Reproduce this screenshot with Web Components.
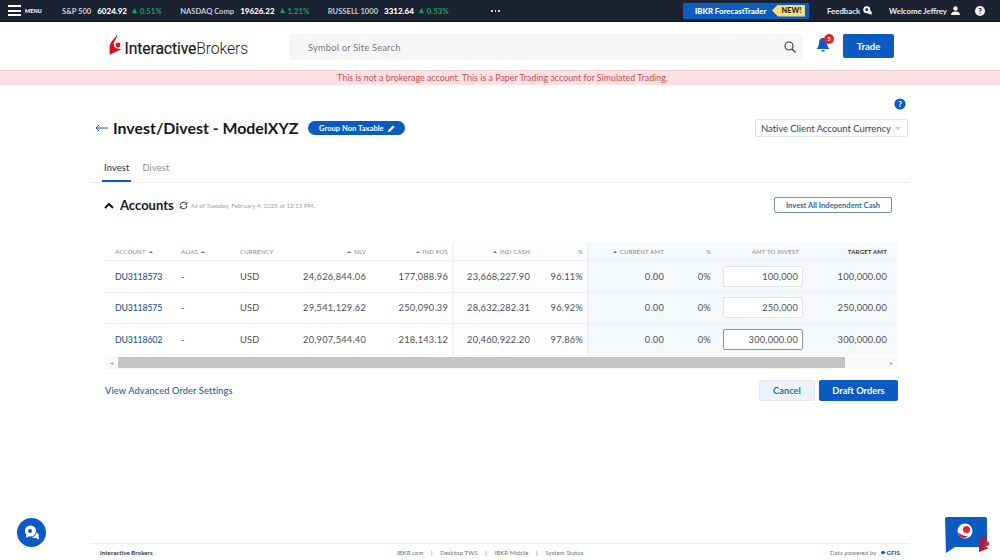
<!DOCTYPE html>
<html lang="en"><head><meta charset="utf-8"><title>Invest/Divest</title>
<style>
html,body{margin:0;height:560px;overflow:hidden;background:#fff}
body{font-family:Lato,"Open Sans",sans-serif;color:#2a2f36;display:flex;flex-direction:column;position:relative}
ib-main{flex:1}
</style></head><body>
<ib-topbar></ib-topbar>
<ib-header></ib-header>
<ib-banner>This is not a brokerage account. This is a Paper Trading account for Simulated Trading.</ib-banner>
<ib-main></ib-main>
<ib-footer></ib-footer>
<ib-fab></ib-fab>
<script>
function def(name,html,init){customElements.define(name,class extends HTMLElement{constructor(){super();this.attachShadow({mode:'open'}).innerHTML=html;if(init)init(this.shadowRoot)}})}

def('ib-tick',`<style>
:host{display:inline-flex;align-items:center;font:700 7.6px Lato,sans-serif;color:#c9ccd2;white-space:nowrap}
b{color:#fff;font-weight:900;margin:0 5px 0 6px;font-size:8px}
i{font-style:normal;color:#12a55c;font-weight:700;display:inline-flex;align-items:center;gap:3px;font-size:7.8px}
svg{width:5px;height:5px}
</style><span><slot name="n"></slot></span><b><slot name="v"></slot></b><i><svg viewBox="0 0 10 10"><path d="M5 0 10 10H0z" fill="#12a55c"/></svg><slot name="p"></slot></i>`);

def('ib-topbar',`<style>
:host{display:flex;align-items:center;height:21px;background:#1b2231;border-bottom:1px solid #10141d;color:#fff;box-sizing:content-box;font-family:Lato,sans-serif;position:relative}
.burger{width:13px;height:11px;margin-left:8px;display:flex;flex-direction:column;justify-content:space-between;flex:none}
.burger i{display:block;height:2px;background:#fff}
.m{font-size:5.4px;font-weight:900;margin-left:4px;letter-spacing:.1px;width:20px}
.t{display:flex;margin-left:17px;gap:18.4px;width:429px;flex:none}
.dots{display:flex;gap:2px;flex:none;width:9px}
.dots i{width:2px;height:2px;border-radius:50%;background:#fff;display:block}
.ft{margin-left:183px;width:126px;height:16px;background:#0d5cc0;display:flex;align-items:center;font-size:7.8px;font-weight:900;box-sizing:border-box;padding-left:12px;border-radius:1px;position:relative;overflow:hidden;white-space:nowrap;flex:none}
.new{position:absolute;right:4px;top:2px;height:12px;width:33px;background:#f6dc7a;color:#2c2a1a;font-size:7.4px;display:flex;align-items:center;justify-content:center;clip-path:polygon(6px 0,100% 0,100% 100%,6px 100%,0 50%);box-sizing:border-box;padding-left:6px}
.r{display:flex;align-items:center;font-size:7.8px;font-weight:700;color:#eceef1;white-space:nowrap}
svg{display:block;flex:none}
</style>
<div class="burger"><i></i><i></i><i></i></div><div class="m">MENU</div>
<div class="t">
<ib-tick><span slot="n">S&amp;P 500</span><span slot="v">6024.92</span><span slot="p">0.51%</span></ib-tick>
<ib-tick><span slot="n">NASDAQ Comp</span><span slot="v">19626.22</span><span slot="p">1.21%</span></ib-tick>
<ib-tick><span slot="n">RUSSELL 1000</span><span slot="v">3312.64</span><span slot="p">0.53%</span></ib-tick>
</div><div class="dots"><i></i><i></i><i></i></div>
<div class="ft">IBKR ForecastTrader<span class="new">NEW!</span></div>
<div class="r" style="margin-left:18px;width:46px">Feedback<svg style="margin-left:3px" width="9" height="9" viewBox="0 0 12 12"><circle cx="5" cy="5" r="4.6" fill="#fff"/><circle cx="5" cy="5" r="1.9" fill="#1b2231"/><path d="M9.4 5.600c1.800 1 2.400 2.400 2 3.600l.4 2.400-2.600-1c-1.200.3-2.400 0-3.400-.7 2 0 3.400-2.100 3.600-4.300z" fill="#fff"/></svg></div>
<div class="r" style="margin-left:16px;width:71px">Welcome Jeffrey<svg style="margin-left:auto" width="9" height="9" viewBox="0 0 12 12"><circle cx="6" cy="3.200" r="3" fill="#fff"/><path d="M0 12c0-3.600 2.600-4.800 6-4.800s6 1.200 6 4.800z" fill="#fff"/></svg></div>
<svg style="margin-left:15px" width="10" height="10" viewBox="0 0 12 12"><circle cx="6" cy="6" r="6" fill="#f2f3f5"/><text x="6" y="9.200" text-anchor="middle" font-size="9" font-weight="900" font-family="Lato" fill="#1b2231">?</text></svg>`);

def('ib-header',`<style>
:host{display:flex;align-items:center;height:48px;background:#fff;padding-left:109px;box-sizing:border-box;font-family:Lato,sans-serif}
.logo{display:flex;align-items:center;width:180px;height:30px;flex:none;position:relative;top:-2px}
.lt{font:400 15.7px Roboto,"Liberation Sans",sans-serif;color:#17191c;letter-spacing:-.1px;margin-left:2.5px;position:relative;top:4px;white-space:nowrap;-webkit-text-stroke:.2px #17191c}
.lt span{font-weight:300;-webkit-text-stroke:0}
.s{width:514px;height:26px;background:#f6f6f6;border-radius:3px;display:flex;align-items:center;justify-content:space-between;padding:0 7px 0 19px;box-sizing:border-box;font-size:9.300px;color:#75797e;letter-spacing:.2px;flex:none;position:relative;top:1px}
.bell{position:relative;margin-left:13px;width:21px;height:24px;top:0}
.bell em{position:absolute;left:8px;top:0;width:10px;height:10px;border-radius:50%;background:#e3232a;color:#fff;font:700 6px/10px Lato;text-align:center;font-style:normal}
.tr{margin-left:6px;width:51px;height:24px;background:#0b5bc2;border-radius:2px;color:#fff;font-size:9.600px;font-weight:700;display:flex;align-items:center;justify-content:center;position:relative;top:0}
</style>
<div class="logo"><svg width="13" height="22" viewBox="0 0 13 22" style="flex:none"><path d="M8.800 0C8.200 3.500 .6 8.500 .6 13.500V21.800L12.200 16.200 8.400 15.600A4.800 4.800 0 0 1 5 9.200C6.400 6.800 8.200 4 8.800 0z" fill="#d81222"/><circle cx="9" cy="12" r="2.400" fill="#d81222"/></svg><div class="lt">Interactive<span>Brokers</span></div></div>
<div class="s">Symbol or Site Search<svg width="12" height="12" viewBox="0 0 12 12" fill="none" stroke="#333" stroke-width="1.100"><circle cx="5" cy="5" r="4"/><path d="M8 8l3.500 3.500"/></svg></div>
<div class="bell"><svg style="position:absolute;left:0;top:3px" width="14" height="16" viewBox="0 0 14 16"><path d="M7 1C4 1 3 3.600 3 6c0 3-1.400 4.600-2.500 6h13C12.400 10.600 11 9 11 6c0-2.400-1-5-4-5z" fill="#0c5cc4"/><rect x="5.400" y="13" width="3.200" height="1.600" rx=".8" fill="#0c5cc4"/></svg><em>5</em></div>
<div class="tr">Trade</div>`);

def('ib-banner',`<style>
:host{display:block;height:15px;background:#fce1e2;border-top:1px solid #f3d6d7;box-sizing:border-box;text-align:center;color:#c64f56;font:400 8.800px/14px Lato,sans-serif;letter-spacing:.04px;padding-left:5px}
</style><slot></slot>`);

def('ib-title',`<style>
:host{display:flex;align-items:center;padding:0 2px 0 5px;height:26px;font-family:Lato,sans-serif}
svg{display:block;flex:none}
h1{margin:-2px 0 0 5px;font:700 15.900px Lato,sans-serif;color:#15181c;white-space:nowrap}
.p{margin-left:10px;height:14px;width:97px;border-radius:7px;background:#0b5bc2;color:#fff;font-size:7.600px;font-weight:700;display:flex;align-items:center;gap:4px;justify-content:center}
.sel{margin-left:auto;width:153px;height:18px;border:1px solid #e2e4e6;border-radius:2px;box-sizing:border-box;display:flex;align-items:center;padding:0 6px 0 5px;font-size:9.500px;color:#3d4248;justify-content:space-between;letter-spacing:-.05px;white-space:nowrap}
.sel i{width:0;height:0;border:3px solid transparent;border-top:3px solid #c9cbce;margin-top:3px}
</style>
<svg width="13" height="8" viewBox="0 0 13 8" fill="none" stroke="#0b5bc2" stroke-width="1"><path d="M13 4H1M4.200.8 1 4l3.200 3.200"/></svg>
<h1>Invest/Divest - ModelXYZ</h1>
<div class="p">Group Non Taxable<svg width="7" height="7" viewBox="0 0 10 10"><path d="M0 10l.6-3L7 .6 9.400 3 3 9.400zM7.800 0 10 2.200" fill="#fff"/></svg></div>
<div class="sel">Native Client Account Currency<i></i></div>`);

def('ib-tabs',`<style>
:host{display:flex;gap:13px;height:28px;border-bottom:1px solid #eeeff1;font:400 9.300px/1 Lato,sans-serif;color:#8d9095;padding-left:14px;letter-spacing:.15px;box-sizing:border-box}
span{display:block;padding-top:8px;height:19px;position:relative}
.a{color:#2a2f36;}
.a::after{content:"";position:absolute;left:-2px;right:-2px;bottom:0;height:2px;background:#0b5bc2}
</style><span class="a">Invest</span><span>Divest</span>`);

def('ib-accounts-head',`<style>
:host{display:flex;align-items:center;height:16px;font-family:Lato,sans-serif;padding-left:14px;padding-right:18px}
h2{margin:0 0 0 6px;font:700 13px Lato,sans-serif;color:#15181c}
.as{font-size:6px;color:#9a9da1;margin-left:3px;letter-spacing:.1px;white-space:nowrap}
.btn{margin-left:auto;width:118px;height:16px;border:1px solid #6f93ad;border-radius:2px;box-sizing:border-box;font-size:7.600px;font-weight:700;color:#3a6b93;display:flex;align-items:center;justify-content:center;white-space:nowrap}
svg{flex:none;display:block}
</style>
<svg width="10" height="7" viewBox="0 0 10 7" fill="none" stroke="#15181c" stroke-width="2"><path d="M1 6l4-4 4 4"/></svg>
<h2>Accounts</h2>
<svg style="margin-left:5px" width="9" height="9" viewBox="0 0 12 12" fill="none" stroke="#333" stroke-width="1.300"><path d="M1.500 6A4.500 4.500 0 0 1 10 4M10.500 6A4.500 4.500 0 0 1 2 8"/><path d="M10.500 1.500V4.500H7.500M1.500 10.500V7.500H4.500" stroke-width="1"/></svg>
<span class="as">As of Tuesday, February 4, 2025 at 12:13 PM.</span>
<div class="btn">Invest All Independent Cash</div>`);

const COLS='76px 59px 50px 80px 82px 82px 53px 81px 47px 96px 87px';

def('ib-table',`<style>
:host{display:block;width:793px;margin-left:15px;font-family:Lato,sans-serif}
.g{display:grid;grid-template-columns:${COLS};grid-auto-rows:auto}
.h,.c{display:flex;align-items:center;box-sizing:border-box;white-space:nowrap}
.h{height:18px;font-size:6.100px;color:#858a90;letter-spacing:.15px;border-bottom:1px solid #f0f1f3;gap:3px}
.c{height:31.600px;font-size:9.300px;color:#4b5056;border-bottom:1px solid #eef0f2;letter-spacing:.2px}
.last{border-bottom:0}
.r{justify-content:flex-end;padding-right:4px}
.first{padding-left:10px}
a{color:#1d5a99;text-decoration:none;font-weight:500;font-size:8.800px;letter-spacing:-.2px}
.b1{background:#fcfdfe}
.b1l{border-left:2px solid #f1f3f6}
.b2{background:#f6f9fc}
.b2l{border-left:2px solid #eff2f5}
.tri{width:0;height:0;border:2px solid transparent;border-bottom:2.500px solid #6d7278;margin-top:-2px;display:inline-block}
.t{color:#33383e;font-weight:700}
input{width:80px;height:21px;border:1px solid #e3e6e9;border-radius:2px;box-sizing:border-box;background:#fff;text-align:right;font:9.300px Lato,sans-serif;color:#4b5056;padding:0 4px;letter-spacing:.2px;outline:0}
input.f{border:1px solid #7f98a4}
.inp{justify-content:center;padding-right:0}
.sb{display:flex;align-items:center;height:12px;margin-top:1px;background:#f8f8f8}
.sb i{flex:none;width:13px;text-align:center;font:normal 6px Lato;color:#a8a8a8}
.sb b{display:block;width:727px;height:11px;background:#c4c4c4}
</style><div class="g"></div><div class="sb"><i>◂</i><b></b><i style="margin-left:auto">▸</i></div>`,root=>{
 const g=root.querySelector('.g');const tri='<span class="tri"></span>';
 const heads=[['ACCOUNT '+tri,'first'],['ALIAS '+tri,''],['CURRENCY',''],[tri+' NLV','r'],[tri+' IND POS','r'],[tri+' IND CASH','r b1 b1l'],['%','r b1'],[tri+' CURRENT AMT','r b2 b2l'],['%','r b2'],['AMT TO INVEST','r b2'],['TARGET AMT','r b2 t']];
 const rows=[['DU3118573','24,626,844.06','177,088.96','23,668,227.90','96.11%','100,000','100,000.00',''],['DU3118575','29,541,129.62','250,090.39','28,632,282.31','96.92%','250,000','250,000.00',''],['DU3118602','20,907,544.40','218,143.12','20,460,922.20','97.86%','300,000.00','300,000.00','f']];
 let h='';heads.forEach((x,i)=>{h+=`<div class="h ${x[1]}" style="${i==10?'padding-right:11px':i==9?'padding-right:12px':''}">${x[0]}</div>`});
 rows.forEach((r,n)=>{const L=n==2?' last':'';h+=`<div class="c first${L}"><a href="#">${r[0]}</a></div><div class="c${L}">-</div><div class="c${L}">USD</div><div class="c r${L}">${r[1]}</div><div class="c r${L}">${r[2]}</div><div class="c r b1 b1l${L}">${r[3]}</div><div class="c r b1${L}">${r[4]}</div><div class="c r b2 b2l${L}">0.00</div><div class="c r b2${L}">0%</div><div class="c inp b2${L}"><input class="${r[7]}" value="${r[5]}" aria-label="Amount to invest"></div><div class="c r b2${L}" style="padding-right:11px">${r[6]}</div>`});
 g.innerHTML=h;
});

def('ib-actions',`<style>
:host{display:flex;align-items:center;font-family:Lato,sans-serif;padding:0 12px 0 15px;height:22px}
a{font-size:9.300px;color:#2b6195;font-weight:500;letter-spacing:.1px}
.c{margin-left:auto;width:56px;height:21px;background:#edf1f8;border:1px solid #e3e7ef;box-sizing:border-box;border-radius:2px;color:#3a6ea5;font-size:9.300px;font-weight:700;display:flex;align-items:center;justify-content:center}
.d{margin-left:4px;width:79px;height:21px;background:#0b5bc2;border-radius:2px;color:#fff;font-size:9.300px;font-weight:700;display:flex;align-items:center;justify-content:center}
</style><a>View Advanced Order Settings</a><div class="c">Cancel</div><div class="d">Draft Orders</div>`);

def('ib-main',`<style>
:host{display:block;width:820px;margin:0 auto;box-sizing:border-box;position:relative;padding-top:13px}
.q{display:flex;justify-content:flex-end;height:12px;padding-right:4px}
ib-title{margin-top:5px}
ib-tabs{margin-top:14px}
ib-accounts-head{margin-top:14px}
ib-table{margin-top:30px}
ib-actions{margin-top:11px}
</style>
<div class="q"><svg width="12" height="12" viewBox="0 0 12 12"><circle cx="6" cy="6" r="5.600" fill="#0b5bc2"/><text x="6" y="8.800" text-anchor="middle" font-size="8" font-weight="900" font-family="Lato" fill="#fff">?</text></svg></div>
<ib-title></ib-title><ib-tabs></ib-tabs><ib-accounts-head></ib-accounts-head><ib-table></ib-table><ib-actions></ib-actions>`);

def('ib-footer',`<style>
:host{display:grid;grid-template-columns:297px auto 1fr;align-items:center;width:820px;height:17px;margin:0 auto;border-top:1px solid #eceef0;box-sizing:border-box;padding:1px 10px 0;font:400 5.900px Lato,sans-serif;color:#6d7176;letter-spacing:.15px;white-space:nowrap}
b{font-weight:700;color:#2b2f35}
.m{display:flex;gap:7.500px}
.e{justify-self:end;display:flex;align-items:center;gap:4px}
.g{color:#1d5a99;font-weight:900;font-size:6px;display:flex;align-items:center;gap:1px}
.g i{width:5px;height:4px;background:#0b5bc2;clip-path:polygon(0 50%,50% 0,100% 50%,50% 100%);display:block}
</style><b>Interactive Brokers</b><div class="m"><span>IBKR.com</span><span>|</span><span>Desktop TWS</span><span>|</span><span>IBKR Mobile</span><span>|</span><span>System Status</span></div><div class="e">Data powered by <span class="g"><i></i>GFIS</span></div>`);

def('ib-fab',`<style>
:host{display:contents}
.a{position:absolute;left:17px;top:518px;width:29px;height:29px;border-radius:50%;background:#0b5bc2;display:flex;align-items:center;justify-content:center}
.b{position:absolute;left:945px;top:517px;width:46px;height:37px}
</style>
<div class="a"><svg width="17" height="17" viewBox="0 0 17 17"><circle cx="7.500" cy="7" r="5.600" fill="#fff"/><path d="M3.500 10.500 3 14l3.500-2z" fill="#fff"/><circle cx="7" cy="7" r="2" fill="#0b5bc2"/><path d="M13.400 8.500c2 1 2.800 2.500 2.200 4l.4 3-3-1.400c-1.500.3-3-.2-4-1.100 2.400 0 4.200-2 4.400-4.500z" fill="#fff"/></svg></div>
<div class="b"><svg width="46" height="37" viewBox="0 0 46 37"><path d="M2 0H40a2 2 0 0 1 2 2V28a2 2 0 0 1-2 2H10L1 36 0 2a2 2 0 0 1 2-2z" fill="#0b5bc2"/><circle cx="20" cy="14" r="7.500" fill="#fff"/><circle cx="21.500" cy="12.500" r="3.500" fill="#e3232a"/><path d="M12.800 15c2.500 2.500 6 4.200 10 4.300-3.500 3.300-8.800 1.600-10-4.300z" fill="#c9202e"/><path d="M42.500 15C42 18 36 22 34 25V35L44 31 41 30 38.500 30.200C37 28 37.500 25.500 39 24 40.500 22 42.300 18 42.500 15z" fill="#c4122a"/><circle cx="41.500" cy="26.500" r="2.600" fill="#e3232a"/></svg></div>`);
</script>
</body></html>
